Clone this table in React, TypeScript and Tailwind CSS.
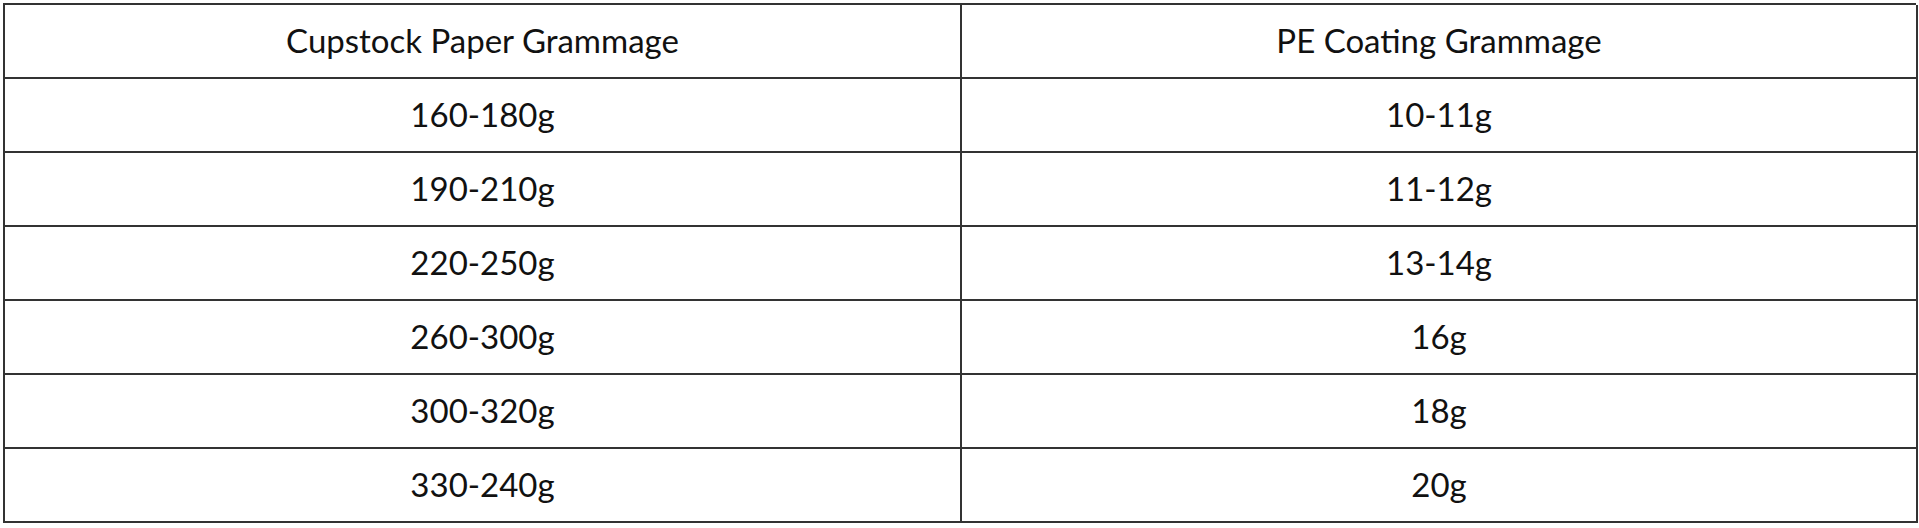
const rows: [string, string][] = [
  ["Cupstock Paper Grammage", "PE Coating Grammage"],
  ["160-180g", "10-11g"],
  ["190-210g", "11-12g"],
  ["220-250g", "13-14g"],
  ["260-300g", "16g"],
  ["300-320g", "18g"],
  ["330-240g", "20g"],
];

const App = () => {
  return (
    <div className="w-[1919px] h-[528px] bg-white pt-[3px] pl-[3px]">
      {/* grammage table */}
      <div
        className="w-[1913px] grid grid-cols-[957px_956px] border-l-2 border-t-2 border-[#333333] text-[33px] text-[#111111]"
        style={{ fontFamily: "Lato, 'Open Sans', sans-serif" }}
      >
        {rows.map(([paper, pe], i) => (
          <div key={i} className="contents">
            <div className="h-[74px] flex items-center justify-center border-r-2 border-b-2 border-[#333333]">
              {paper}
            </div>
            <div className="h-[74px] flex items-center justify-center border-r-2 border-b-2 border-[#333333]">
              {pe}
            </div>
          </div>
        ))}
      </div>
    </div>
  );
};

export default App;
